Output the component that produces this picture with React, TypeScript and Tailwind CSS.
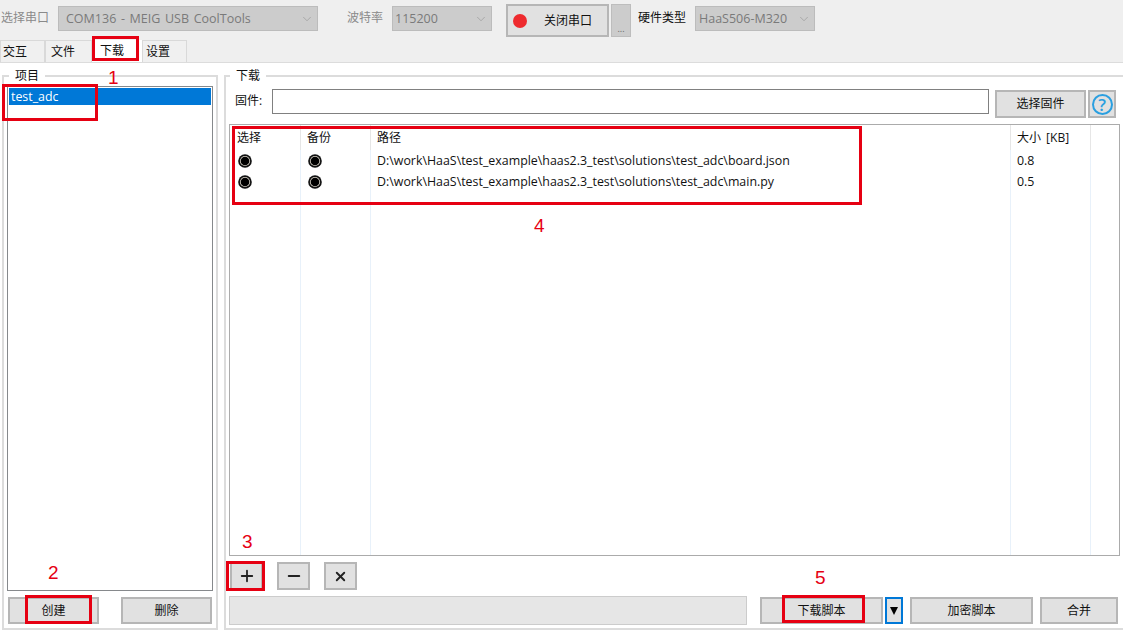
import { ChevronDown, Minus, Plus, X } from "lucide-react";
import type { ReactNode } from "react";

const font = "font-['Open_Sans','Noto_Sans_CJK_SC',sans-serif]";

function Combo({ text, className }: { text: string; className: string }) {
  return (
    <div className={`flex h-[25px] items-center justify-between border border-[#bcbcbc] bg-[#cccccc] pr-[3px] text-[12.5px] text-[#7a7a7a] ${className}`}>
      <span className="pt-px">{text}</span>
      <ChevronDown size={14} strokeWidth={1} color="#8f8f8f" />
    </div>
  );
}

function Btn({ children, className }: { children: ReactNode; className: string }) {
  return (
    <div className={`flex items-center justify-center border-2 border-[#b6b6b6] bg-[#e1e1e1] text-xs text-[#111] ${className}`}>
      {children}
    </div>
  );
}

function Tab({ label, className }: { label: string; className: string }) {
  return (
    <div className={`flex h-[22px] items-center border border-b-0 border-[#d9d9d9] bg-[#f0f0f0] text-xs text-[#111] ${className}`}>
      {label}
    </div>
  );
}

function Radio() {
  return (
    <svg width="14" height="14" viewBox="0 0 14 14" className="block">
      <circle cx="7" cy="7" r="6.8" fill="#111" />
      <circle cx="7" cy="7" r="5.1" fill="#d9d4c8" />
      <circle cx="7" cy="7" r="4.3" fill="#000" />
    </svg>
  );
}

function Mark({ className }: { className: string }) {
  return <div className={`pointer-events-none absolute border-[3px] border-[#e60012] ${className}`} />;
}

function Num({ n, className }: { n: string; className: string }) {
  return <span className={`absolute font-['Liberation_Sans',sans-serif] text-[19px] leading-none text-[#e60012] ${className}`}>{n}</span>;
}

function Column({ title, width, pad = "pl-[6px]", children }: { title: string; width: string; pad?: string; children?: ReactNode }) {
  return (
    <div className={`flex shrink-0 flex-col border-r border-[#e8f1fa] ${width}`}>
      <div className={`-mr-px flex h-[25px] items-center border-r border-[#e6e6e6] text-xs text-[#111] [word-spacing:2px] ${pad}`}>{title}</div>
      {children}
    </div>
  );
}

const paths = [
  ["D:\\work\\HaaS\\test_example\\haas2.3_test\\solutions\\test_adc\\board.json", "0.8"],
  ["D:\\work\\HaaS\\test_example\\haas2.3_test\\solutions\\test_adc\\main.py", "0.5"],
];

export default function App() {
  return (
    <div className={`relative h-[636px] w-[1123px] overflow-hidden bg-white ${font}`}>
      <header className="h-[63px] border-b border-[#dcdcdc] bg-[#efefef]">
        <div className="flex h-[40px] items-start pt-[4px]">
          <span className="ml-px mt-[6px] w-[57px] text-xs text-[#8a8a8a]">选择串口</span>
          <Combo text="COM136 - MEIG USB CoolTools" className="mt-[2px] w-[260px] pl-[7px] [word-spacing:1.4px]" />
          <span className="ml-[29px] mt-[6px] w-[45px] text-xs text-[#8a8a8a]">波特率</span>
          <Combo text="115200" className="mt-[2px] w-[100px] pl-[2px]" />
          <Btn className="ml-[14px] h-[33px] w-[103px] gap-[17px] !justify-start pl-[5px] pt-px">
            <span className="size-[14px] rounded-full bg-[#ee2a2e]" />
            <span>关闭串口</span>
          </Btn>
          <div className="ml-[2px] flex h-[33px] w-[20px] items-end justify-center border border-[#bdbdbd] bg-[#cccccc] pb-[3px] text-[9px] leading-none text-[#666]">...</div>
          <span className="ml-[7px] mt-[6px] w-[57px] text-xs text-[#111]">硬件类型</span>
          <Combo text="HaaS506-M320" className="mt-[2px] w-[120px] pl-[3px]" />
        </div>
        <div className="flex h-[22px] items-end">
          <Tab label="交互" className="w-[45px] pl-[2px]" />
          <Tab label="文件" className="w-[47px] pl-[5px]" />
          <div className="flex h-[22px] w-[50px] items-center bg-white pl-[8px] text-xs text-[#111]">下载</div>
          <Tab label="设置" className="w-[45px] pl-[3px]" />
        </div>
      </header>

      <main className="flex h-[573px] items-start pl-[2px] pt-[12px]">
        <fieldset className="relative flex h-[555px] w-[216px] flex-col border-2 border-[#dcdcdc] px-[3px]">
          <legend className="absolute -top-[9px] left-[5px] bg-white px-[6px] text-xs leading-[16px] text-[#111]">项目</legend>
          <div className="mt-[9px] h-[505px] border border-[#86898c] p-px">
            <div className="flex h-[17px] items-center bg-[#0078d7] pl-[2px] pt-px text-[12.4px] text-white">test_adc</div>
          </div>
          <div className="mt-[6px] flex gap-[22px] pl-px">
            <Btn className="h-[27px] w-[91px]">创建</Btn>
            <Btn className="h-[27px] w-[91px]">删除</Btn>
          </div>
        </fieldset>

        <section className="relative ml-[6px] flex h-[555px] w-[899px] flex-col border-2 border-r-0 border-[#dcdcdc] pl-[3px]">
          <span className="absolute -top-[9px] left-[4px] bg-white px-[6px] text-xs leading-[16px] text-[#111]">下载</span>
          <div className="mt-[12px] flex h-[29px] items-start">
            <span className="ml-[6px] mt-[4px] w-[37px] text-xs text-[#111]">固件:</span>
            <div className="h-[25px] w-[717px] border border-[#808080] bg-white" />
            <Btn className="ml-[6px] mt-px h-[28px] w-[91px]">选择固件</Btn>
            <Btn className="ml-[2px] mt-px h-[28px] w-[28px]">
              <span className="flex size-[21px] items-center justify-center rounded-full border-2 border-[#2a9fe0] text-[17px] font-semibold leading-none text-[#2a9fe0]">?</span>
            </Btn>
          </div>
          <div className="mt-[6px] flex h-[432px] w-[891px] border border-[#ababab] bg-white">
            <Column title="选择" width="w-[71px]" pad="pl-[7px]">
              {paths.map(([p]) => (
                <div key={p} className="flex h-[21px] items-center pl-[8px]"><Radio /></div>
              ))}
            </Column>
            <Column title="备份" width="w-[70px]">
              {paths.map(([p]) => (
                <div key={p} className="flex h-[21px] items-center pl-[7px]"><Radio /></div>
              ))}
            </Column>
            <Column title="路径" width="w-[640px]">
              {paths.map(([p]) => (
                <div key={p} className="flex h-[21px] items-center pl-[6px] pt-px text-[12.4px] text-[#111]">{p}</div>
              ))}
            </Column>
            <Column title="大小 [KB]" width="w-[80px]">
              {paths.map(([p, s]) => (
                <div key={p} className="flex h-[21px] items-center pl-[6px] pt-px text-[12.4px] text-[#111]">{s}</div>
              ))}
            </Column>
          </div>
          <div className="mt-[6px] flex h-[29px] items-start gap-[14px] pl-px">
            <Btn className="h-[28px] w-[33px]"><Plus size={18} strokeWidth={2.4} color="#222" /></Btn>
            <Btn className="h-[28px] w-[33px]"><Minus size={18} strokeWidth={2.6} color="#222" /></Btn>
            <Btn className="h-[28px] w-[33px]"><X size={15} strokeWidth={3} color="#222" /></Btn>
          </div>
          <div className="mt-[5px] flex items-start">
            <div className="h-[29px] w-[518px] border border-[#cccccc] bg-[#e6e6e6]" />
            <Btn className="ml-[13px] mt-px h-[27px] w-[123px]">下载脚本</Btn>
            <div className="ml-[2px] mt-px flex h-[27px] w-[18px] items-center justify-center border-2 border-[#0078d7] bg-[#e1e1e1]">
              <span className="h-0 w-0 border-x-[4px] border-t-[8px] border-x-transparent border-t-black" />
            </div>
            <Btn className="ml-[7px] mt-px h-[27px] w-[123px]">加密脚本</Btn>
            <Btn className="ml-[7px] mt-px h-[27px] w-[78px]">合并</Btn>
          </div>
        </section>
      </main>

      <Mark className="left-[92px] top-[36px] h-[25px] w-[47px]" />
      <Mark className="left-[2px] top-[84px] h-[37px] w-[96px]" />
      <Mark className="left-[25px] top-[595px] h-[29px] w-[67px]" />
      <Mark className="left-[226px] top-[561px] h-[30px] w-[39px]" />
      <Mark className="left-[232px] top-[126px] h-[79px] w-[630px]" />
      <Mark className="left-[782px] top-[595px] h-[28px] w-[83px]" />
      <Num n="1" className="left-[108px] top-[68px]" />
      <Num n="2" className="left-[48px] top-[563px]" />
      <Num n="3" className="left-[242px] top-[532px]" />
      <Num n="4" className="left-[534px] top-[216px]" />
      <Num n="5" className="left-[815px] top-[568px]" />
    </div>
  );
}
